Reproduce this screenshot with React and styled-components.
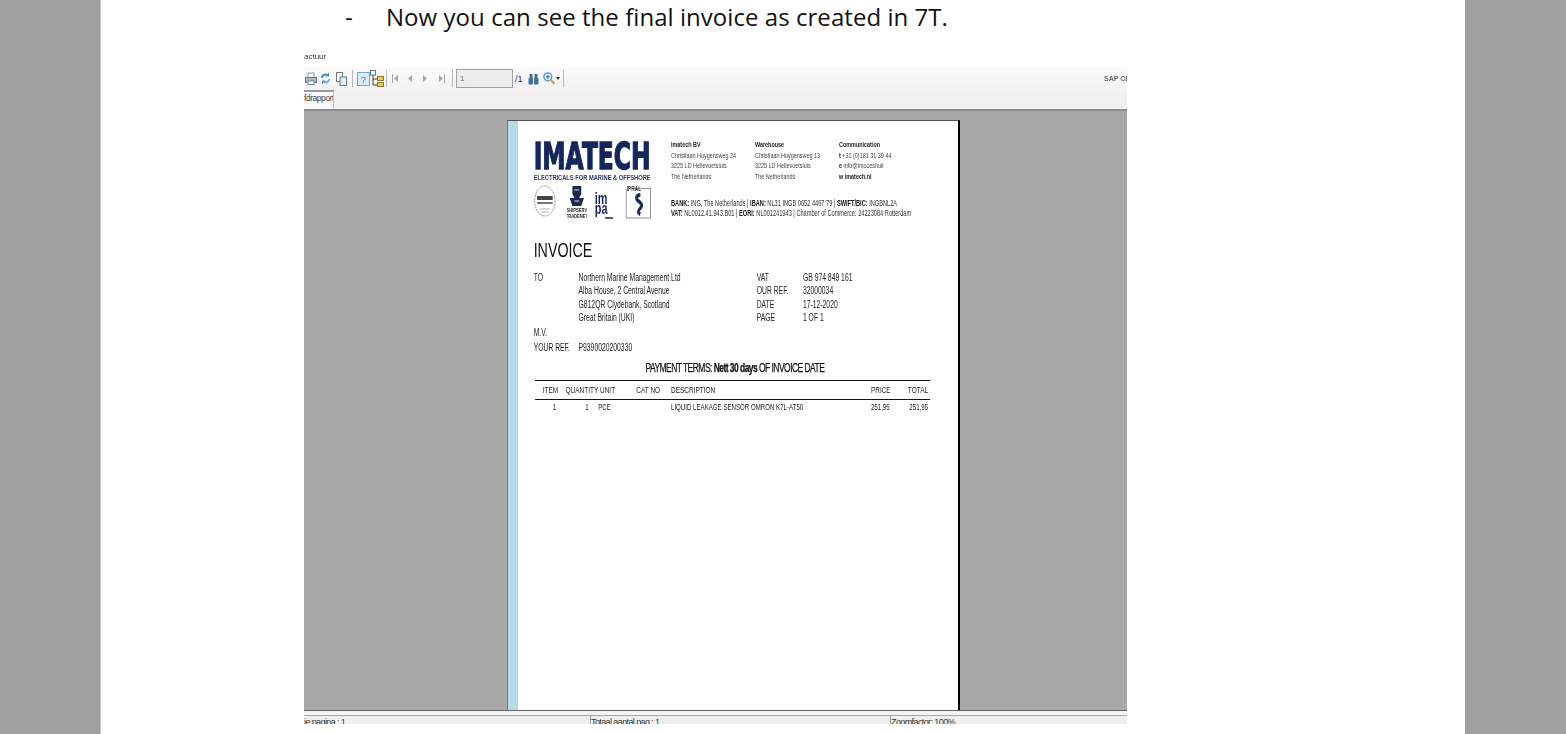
import React from "react";
import styled, { createGlobalStyle } from "styled-components";

const Global = createGlobalStyle`
  html, body { margin: 0; padding: 0; height: 100%; overflow: hidden; background: #a0a0a0; }
  #root { height: 100%; }
`;

const Page = styled.div`
  height: 734px;
  padding-left: 100px;
  box-sizing: border-box;
  overflow: hidden;
`;
const Sheet = styled.main`
  width: 1365px;
  height: 734px;
  background: #fff;
  border-left: 1px solid #c8c8c8;
  box-sizing: border-box;
  overflow: hidden;
`;
const Bullet = styled.p`
  display: flex;
  margin: 0;
  height: 50px;
  padding: 1px 0 0 244px;
  box-sizing: border-box;
  font: 24px/32px "Open Sans", sans-serif;
  letter-spacing: 0.05px;
  color: #111;
`;
const Dash = styled.span`width: 41px;`;
const Viewer = styled.section`
  width: 823px;
  margin-left: 203px;
  height: 674px;
  display: flex;
  flex-direction: column;
  overflow: hidden;
  font-family: "Liberation Sans", sans-serif;
`;
const TitleBar = styled.div`
  height: 17px;
  font-size: 8px;
  line-height: 14px;
  color: #333;
  background: #fff;
  filter: blur(0.3px);
`;
const Toolbar = styled.div`
  height: 23px;
  display: flex;
  align-items: center;
  background: linear-gradient(#fafafa, #f3f3f3);
  color: #444;
  font-size: 9px;
`;
const Slot = styled.span`
  width: ${(p) => p.$w}px;
  height: 14px;
  flex: none;
  display: flex;
  justify-content: center;
  align-items: center;
  filter: blur(0.4px);
`;
const Sep = styled.span`
  width: 1px;
  height: 17px;
  background: #b8b8b8;
  margin: 0 ${(p) => p.$m || 3}px;
  flex: none;
`;
const PageInput = styled.span`
  height: 19px;
  border: 1px solid #a0a0a0;
  background: #ececec;
  font-size: 8px;
  line-height: 17px;
  padding-left: 3px;
  box-sizing: border-box;
  width: 57px;
  color: #777;
  flex: none;
`;
const PageTotal = styled.span`
  width: 14px;
  padding-left: 2px;
  box-sizing: border-box;
  flex: none;
  color: #333;
`;
const Brand = styled.span`
  margin-left: auto;
  font-size: 7px;
  font-weight: 700;
  color: #666;
  white-space: nowrap;
  width: 23px;
  overflow: hidden;
  filter: blur(0.3px);
`;
const TabRow = styled.div`
  height: 21px;
  display: flex;
  background: #f1f1f1;
  border-bottom: 2px solid #8c8c8c;
  box-sizing: border-box;
`;
const Tab = styled.span`
  width: 30px;
  border-top: 2px solid #999;
  border-right: 1px solid #c4c4c4;
  box-sizing: border-box;
  font-size: 8.5px;
  line-height: 13px;
  letter-spacing: -0.45px;
  color: #444;
  background: #f8f8f8;
  white-space: nowrap;
  overflow: hidden;
`;
const Canvas = styled.div`
  height: 599px;
  flex: none;
  background: #a8a8a8;
  padding: 9px 0 0 203px;
  box-sizing: border-box;
  overflow: hidden;
`;
const Paper = styled.article`
  width: 453px;
  height: 620px;
  display: flex;
  background: #fff;
  border-top: 1px solid #555;
  border-left: 1px solid #777;
  border-right: 2px solid #000;
  box-sizing: border-box;
  overflow: hidden;
`;
const Stripe = styled.div`
  width: 10px;
  flex: none;
  background: #b4dce8;
`;
const Invoice = styled.div`
  width: 648px;
  flex: none;
  padding: 19px 0 0 23px;
  box-sizing: border-box;
  transform: scaleX(0.68);
  transform-origin: 0 0;
  filter: blur(0.35px);
  font-family: "Liberation Sans", sans-serif;
  color: #222;
`;
const Head = styled.header`
  display: grid;
  grid-template-columns: 202px 1fr;
  height: 80px;
`;
const LogoCol = styled.div`
  display: flex;
  flex-direction: column;
`;
const Badges = styled.div`
  display: flex;
  align-items: flex-start;
  margin-top: 3px;
  height: 34px;
`;
const Columns = styled.div`
  display: grid;
  grid-template-columns: 123.5px 123.5px 1fr;
  font-size: 8px;
  line-height: 10.7px;
  color: #444;
`;
const Strong = styled.div`
  font-weight: 700;
  color: #222;
`;
const BankLines = styled.div`
  margin-top: 15px;
  font-size: 8.3px;
  line-height: 10.3px;
  color: #333;
  white-space: nowrap;
`;
const Mark = styled.b`color: #111;`;
const Title = styled.h1`
  margin: 18px 0 0;
  font-size: 21px;
  line-height: 24px;
  font-weight: 400;
  color: #111;
`;
const Meta = styled.div`
  display: grid;
  grid-template-columns: 328px 1fr;
  margin-top: 9px;
  font-size: 10px;
  line-height: 13.4px;
  color: #222;
`;
const Labelled = styled.div`
  display: grid;
  grid-template-columns: ${(p) => p.$label}px 1fr;
`;
const Stack = styled.div`
  white-space: nowrap;
`;
const Refs = styled.div`
  display: grid;
  grid-template-columns: 66px 1fr;
  font-size: 10px;
  line-height: 15px;
  color: #222;
`;
const Terms = styled.div`
  width: 592px;
  margin-top: 6px;
  text-align: center;
  font-size: 12.5px;
  line-height: 15px;
  letter-spacing: -0.8px;
  color: #111;
  -webkit-text-stroke: 0.25px #111;
  white-space: nowrap;
`;
const Rows = styled.div`
  width: 581px;
  margin: 4px 0 0 2px;
  color: #222;
`;
const Row = styled.div`
  display: grid;
  grid-template-columns: 34px 59px 56px 51px 1fr 28px 59px;
  align-items: center;
  height: ${(p) => p.$h}px;
  font-size: ${(p) => p.$size}px;
  border-top: 1.5px solid #111;
  white-space: nowrap;
  box-sizing: border-box;
`;
const Cell = styled.span`
  text-align: ${(p) => p.$align || "left"};
  padding-right: ${(p) => p.$pad || 0}px;
`;
const Status = styled.footer`
  height: 14px;
  flex: none;
  background: #f4f4f4;
  border-top: 1px solid #666;
  box-sizing: border-box;
  padding-top: 4px;
  display: grid;
  grid-template-columns: 286px 300px 1fr;
  overflow: hidden;
`;
const StatusCell = styled.span`
  border-top: 1px solid #a8a8a8;
  border-left: ${(p) => (p.$first ? "0" : "1px solid #a8a8a8")};
  background: #efefef;
  font-size: 9px;
  line-height: 13px;
  height: 9px;
  overflow: hidden;
  color: #333;
  white-space: nowrap;
  letter-spacing: -0.6px;
`;

const Printer = () => (
  <svg width="12" height="13" viewBox="0 0 12 13">
    <rect x="3" y="1" width="6" height="5" fill="#fff" stroke="#8a9bb0" />
    <rect x="0.5" y="5.5" width="11" height="5" fill="#a9b8c8" stroke="#65788e" />
    <rect x="3" y="9" width="6" height="3.5" fill="#fff" stroke="#7a8898" />
  </svg>
);
const Refresh = () => (
  <svg width="11" height="13" viewBox="0 0 11 13" fill="none" stroke="#4a8fc0" strokeWidth="2">
    <path d="M2 6a3.5 3.5 0 0 1 6-2.5" />
    <path d="M9 7a3.5 3.5 0 0 1-6 2.5" stroke="#7fb0d0" />
    <path d="M8.5 1v3h-3M2.5 12V9h3" strokeWidth="1" />
  </svg>
);
const Copy = () => (
  <svg width="11" height="14" viewBox="0 0 11 14">
    <rect x="0.5" y="0.5" width="6" height="9" fill="#fff" stroke="#777" />
    <rect x="4" y="5" width="6.5" height="8.5" fill="#e8f0f6" stroke="#5a7c94" />
  </svg>
);
const Help = () => (
  <svg width="13" height="14" viewBox="0 0 13 14">
    <rect x="0.5" y="0.5" width="12" height="13" fill="#d9ecfa" stroke="#6ea6cf" />
    <text x="6.5" y="10.5" fontSize="9" textAnchor="middle" fill="#3e79aa" fontFamily="Liberation Sans">?</text>
  </svg>
);
const Tree = () => (
  <svg width="14" height="17" viewBox="0 0 14 17">
    <rect x="0.5" y="0.5" width="5" height="4.5" fill="#fff" stroke="#5a6f88" />
    <path d="M3 5v10h4M3 9h4" stroke="#444" fill="none" />
    <rect x="7.5" y="6.5" width="6" height="4" fill="#f2c84b" stroke="#8a7a30" />
    <rect x="7.5" y="12.5" width="6" height="4" fill="#f2c84b" stroke="#8a7a30" />
  </svg>
);
const Nav = ({ dir, bar }) => (
  <svg width="7" height="9" viewBox="0 0 7 9" fill="#a8a8a8">
    {bar && <rect x={dir === "left" ? 0 : 6} y="0" width="1" height="9" />}
    <path d={dir === "left" ? "M6 1v7L2 4.5z" : "M1 1v7l4-3.5z"} />
  </svg>
);
const Binoculars = () => (
  <svg width="11" height="12" viewBox="0 0 11 12" fill="#3f6f9c">
    <rect x="1.5" y="1" width="3" height="4" />
    <rect x="6.5" y="1" width="3" height="4" />
    <rect x="0.5" y="5" width="4.5" height="6.5" rx="1" />
    <rect x="6" y="5" width="4.5" height="6.5" rx="1" />
  </svg>
);
const Zoom = () => (
  <svg width="12" height="13" viewBox="0 0 12 13">
    <circle cx="4.8" cy="4.8" r="4" fill="#cfe5f5" stroke="#5c93bf" strokeWidth="1.3" />
    <path d="M3 4.8h3.6M4.8 3v3.6" stroke="#2c6d9e" />
    <path d="M8 8l3.3 3.8" stroke="#c79a45" strokeWidth="2" />
  </svg>
);
const Caret = () => (
  <svg width="4" height="3" viewBox="0 0 4 3"><path d="M0 0h4L2 3z" fill="#333" /></svg>
);

const Logo = () => (
  <svg width="172" height="42" viewBox="0 0 172 42" style={{ display: "block" }}>
    <text x="0" y="29" fontFamily="DejaVu Sans" fontWeight="700" fontSize="38" fill="#14265c"
      textLength="172" lengthAdjust="spacingAndGlyphs" stroke="#14265c" strokeWidth="1.4">IMATECH</text>
    <text x="0" y="40" fontFamily="Liberation Sans" fontWeight="700" fontSize="8" fill="#2b3a66"
      textLength="172" lengthAdjust="spacingAndGlyphs">ELECTRICALS FOR MARINE &amp; OFFSHORE</text>
  </svg>
);
const Badge1 = () => (
  <svg width="33" height="34" viewBox="0 0 33 34" style={{ marginRight: 16 }}>
    <circle cx="16.5" cy="16" r="15" fill="#fff" stroke="#777" strokeDasharray="2 1" />
    <rect x="5" y="11" width="23" height="4" fill="#444" />
    <rect x="5" y="17" width="23" height="2" fill="#777" />
    <path d="M9 24h15M11 27h11" stroke="#aaa" />
  </svg>
);
const Badge2 = () => (
  <svg width="29" height="34" viewBox="0 0 29 34" style={{ marginRight: 11 }}>
    <path d="M8 1h13v8l-3 4H11L8 9z" fill="#1b2a55" />
    <path d="M4 13h21l-4 8H8z" fill="#1b2a55" />
    <path d="M11 5h7M11 16h7" stroke="#fff" />
    <text x="14.5" y="27" fontSize="6" fontWeight="700" textAnchor="middle" fontFamily="Liberation Sans" fill="#222">SHIPSERV</text>
    <text x="14.5" y="33.5" fontSize="6" fontWeight="700" textAnchor="middle" fontFamily="Liberation Sans" fill="#222">TRADENET</text>
  </svg>
);
const Badge3 = () => (
  <svg width="28" height="36" viewBox="0 0 28 36" style={{ marginRight: 18 }}>
    <text x="1" y="19" fontSize="16" fontWeight="700" fontFamily="Liberation Sans" fill="#16265a">im</text>
    <text x="1" y="29" fontSize="16" fontWeight="700" fontFamily="Liberation Sans" fill="#16265a">pa</text>
    <path d="M16 33h12" stroke="#16265a" strokeWidth="1.5" />
  </svg>
);
const Badge4 = () => (
  <svg width="38" height="34" viewBox="0 0 38 34">
    <path d="M12 3.5h25v29.5H1V4" fill="#fff" stroke="#777" />
    <text x="2" y="6" fontSize="7" fontWeight="700" fontFamily="Liberation Sans" fill="#333">IPRAL</text>
    <path d="M22 10c-7 0-7 4-3 6s7 4 3 7-4 5 0 6" fill="none" stroke="#1b2a55" strokeWidth="4" />
  </svg>
);

export default function App() {
  return (
    <Page>
      <Global />
      <Sheet>
        <Bullet>
          <Dash>-</Dash>
          <span>Now you can see the final invoice as created in 7T.</span>
        </Bullet>
        <Viewer>
          <TitleBar>actuur</TitleBar>
          <Toolbar>
            <Slot $w={13}><Printer /></Slot>
            <Slot $w={16}><Refresh /></Slot>
            <Slot $w={16}><Copy /></Slot>
            <Sep />
            <Slot $w={14}><Help /></Slot>
            <Slot $w={14}><Tree /></Slot>
            <Sep $m={2} />
            <Slot $w={12}><Nav dir="left" bar /></Slot>
            <Slot $w={16}><Nav dir="left" /></Slot>
            <Slot $w={16}><Nav dir="right" /></Slot>
            <Slot $w={16}><Nav dir="right" bar /></Slot>
            <Sep $m={3} />
            <PageInput>1</PageInput>
            <PageTotal>/1</PageTotal>
            <Slot $w={12}><Binoculars /></Slot>
            <Slot $w={4} />
            <Slot $w={12}><Zoom /></Slot>
            <Slot $w={6}><Caret /></Slot>
            <Sep $m={2} />
            <Brand>SAP CR</Brand>
          </Toolbar>
          <TabRow><Tab>fdrapport</Tab></TabRow>
          <Canvas>
            <Paper>
              <Stripe />
              <Invoice>
                <Head>
                  <LogoCol>
                    <Logo />
                    <Badges>
                      <Badge1 />
                      <Badge2 />
                      <Badge3 />
                      <Badge4 />
                    </Badges>
                  </LogoCol>
                  <div>
                    <Columns>
                      <div>
                        <Strong>Imatech BV</Strong>
                        <div>Christiaan Huygensweg 24</div>
                        <div>3225 LD Hellevoetsluis</div>
                        <div>The Netherlands</div>
                      </div>
                      <div>
                        <Strong>Warehouse</Strong>
                        <div>Christiaan Huygensweg 13</div>
                        <div>3225 LD Hellevoetsluis</div>
                        <div>The Netherlands</div>
                      </div>
                      <div>
                        <Strong>Communication</Strong>
                        <div><Mark>t</Mark> +31 (0)181 31 39 44</div>
                        <div><Mark>e</Mark> info@imoceshuil</div>
                        <Strong>w imatech.nl</Strong>
                      </div>
                    </Columns>
                    <BankLines>
                      <div><Mark>BANK:</Mark> ING, The Netherlands | <Mark>IBAN:</Mark> NL31 INGB 0652 4467 79 | <Mark>SWIFT/BIC:</Mark> INGBNL2A</div>
                      <div><Mark>VAT:</Mark> NL0012.41.943.B01 | <Mark>EORI:</Mark> NL001241943 | Chamber of Commerce: 24223084 Rotterdam</div>
                    </BankLines>
                  </div>
                </Head>
                <Title>INVOICE</Title>
                <Meta>
                  <Labelled $label={66}>
                    <span>TO</span>
                    <Stack>
                      <div>Northern Marine Management Ltd</div>
                      <div>Alba House, 2 Central Avenue</div>
                      <div>G812QR Clydebank, Scotland</div>
                      <div>Great Britain (UKI)</div>
                    </Stack>
                  </Labelled>
                  <Labelled $label={68}>
                    <Stack>
                      <div>VAT</div>
                      <div>OUR REF.</div>
                      <div>DATE</div>
                      <div>PAGE</div>
                    </Stack>
                    <Stack>
                      <div>GB 974 849 161</div>
                      <div>32000034</div>
                      <div>17-12-2020</div>
                      <div>1 OF 1</div>
                    </Stack>
                  </Labelled>
                </Meta>
                <Refs>
                  <span>M.V.</span><span />
                  <span>YOUR REF.</span><span>P9390020200330</span>
                </Refs>
                <Terms>PAYMENT TERMS: <b>Nett 30 days</b> OF INVOICE DATE</Terms>
                <Rows>
                  <Row $h={19} $size={9.5}>
                    <Cell $align="right">ITEM</Cell>
                    <Cell $align="right">QUANTITY</Cell>
                    <Cell>&nbsp;UNIT</Cell>
                    <Cell>CAT NO</Cell>
                    <Cell>DESCRIPTION</Cell>
                    <Cell $align="right" $pad={3}>PRICE</Cell>
                    <Cell $align="right" $pad={3}>TOTAL</Cell>
                  </Row>
                  <Row $h={16} $size={9}>
                    <Cell $align="right" $pad={3}>1</Cell>
                    <Cell $align="right" $pad={14}>1</Cell>
                    <Cell>PCE</Cell>
                    <Cell />
                    <Cell>LIQUID LEAKAGE SENSOR OMRON K7L-AT50</Cell>
                    <Cell $align="right" $pad={3}>251,95</Cell>
                    <Cell $align="right" $pad={3}>251,95</Cell>
                  </Row>
                </Rows>
              </Invoice>
            </Paper>
          </Canvas>
          <Status>
            <StatusCell $first>ie pagina : 1</StatusCell>
            <StatusCell>Totaal aantal pag : 1</StatusCell>
            <StatusCell>Zoomfactor: 100%</StatusCell>
          </Status>
        </Viewer>
      </Sheet>
    </Page>
  );
}
